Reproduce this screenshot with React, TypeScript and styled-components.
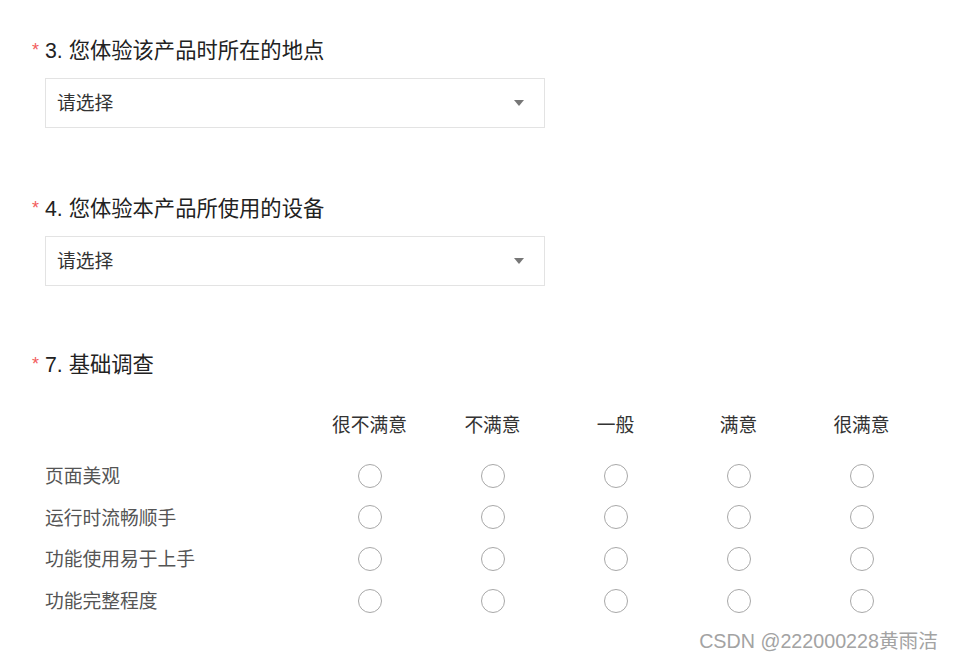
import * as React from "react";
import styled, { createGlobalStyle } from "styled-components";

const GlobalStyle = createGlobalStyle`
  html, body {
    margin: 0;
    padding: 0;
    background: #fff;
  }
  body {
    font-family: "Liberation Sans", "Noto Sans CJK SC", sans-serif;
  }
`;

const Page = styled.div`
  position: relative;
  width: 954px;
  height: 663px;
  padding: 33px 0 0 32px;
  box-sizing: border-box;
  overflow: hidden;
`;

const Question = styled.section<{ $gap: number }>`
  display: flex;
  flex-direction: column;
  margin-bottom: ${(p) => p.$gap}px;
`;

const Title = styled.div`
  display: flex;
  align-items: center;
  height: 30px;
  font-size: 21.3px;
  color: #222;
`;

const Star = styled.span`
  width: 13px;
  color: #f25c5c;
  font-size: 18px;
  line-height: 1;
  padding-top: 4px;
`;

const Select = styled.div`
  display: flex;
  align-items: center;
  justify-content: space-between;
  margin: 15px 0 0 13px;
  width: 500px;
  height: 50px;
  box-sizing: border-box;
  padding: 0 20px 3px 11px;
  border: 1px solid #e3e3e3;
  font-size: 18.75px;
  color: #333;
`;

const Arrow = styled.span`
  width: 0;
  height: 0;
  margin-top: 3px;
  border-left: 5px solid transparent;
  border-right: 5px solid transparent;
  border-top: 6px solid #777;
`;

const Matrix = styled.div`
  display: grid;
  grid-template-columns: 263px repeat(5, 123px);
  grid-template-rows: 62px repeat(4, 41.6px);
  margin: 15px 0 0 13px;
  font-size: 18.75px;
`;

const HeadCell = styled.div`
  display: flex;
  align-items: center;
  justify-content: center;
  color: #333;
`;

const Label = styled.div`
  display: flex;
  align-items: center;
  color: #555;
`;

const Cell = styled.div`
  display: flex;
  align-items: center;
  justify-content: center;
  padding-top: 2px;
`;

const Radio = styled.span`
  width: 24px;
  height: 24px;
  box-sizing: border-box;
  border: 1px solid #a8a8a8;
  border-radius: 50%;
`;

const Watermark = styled.div`
  position: absolute;
  right: 16px;
  bottom: 9px;
  font-size: 19.7px;
  color: #a3a3a3;
`;

const options = ["很不满意", "不满意", "一般", "满意", "很满意"];
const rows = ["页面美观", "运行时流畅顺手", "功能使用易于上手", "功能完整程度"];

const SelectQuestion: React.FC<{ title: string; gap: number }> = ({ title, gap }) => (
  <Question $gap={gap}>
    <Title>
      <Star>*</Star>
      {title}
    </Title>
    <Select>
      请选择
      <Arrow />
    </Select>
  </Question>
);

const App: React.FC = () => {
  return (
    <>
      <GlobalStyle />
      <Page>
        <SelectQuestion title="3. 您体验该产品时所在的地点" gap={63} />
        <SelectQuestion title="4. 您体验本产品所使用的设备" gap={61} />
        <Question $gap={0}>
          <Title>
            <Star>*</Star>
            7. 基础调查
          </Title>
          <Matrix>
            <div />
            {options.map((o) => (
              <HeadCell key={o}>{o}</HeadCell>
            ))}
            {rows.map((r) => (
              <React.Fragment key={r}>
                <Label>{r}</Label>
                {options.map((o) => (
                  <Cell key={o}>
                    <Radio />
                  </Cell>
                ))}
              </React.Fragment>
            ))}
          </Matrix>
        </Question>
        <Watermark>CSDN @222000228黄雨洁</Watermark>
      </Page>
    </>
  );
};

export default App;
